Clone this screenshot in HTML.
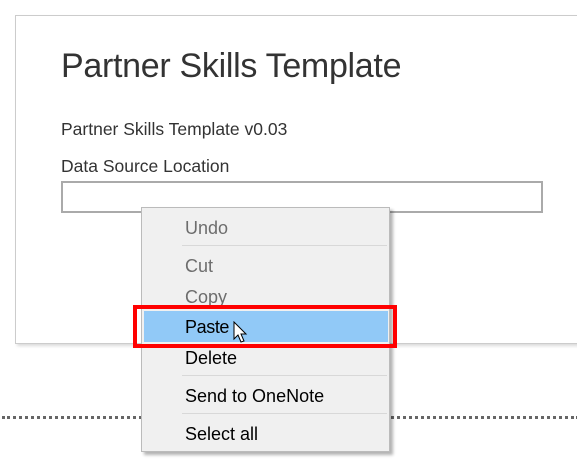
<!DOCTYPE html>
<html><head><meta charset="utf-8"><style>
body{margin:0;width:577px;height:464px;background:#fff;position:relative;overflow:hidden;font-family:"Liberation Sans",sans-serif;}
.panel{position:absolute;left:15px;top:15px;width:600px;height:327px;border:1px solid #ccc;box-shadow:2px 2px 3px rgba(0,0,0,.15);background:#fff;}
.t{position:absolute;left:61px;color:#333;white-space:nowrap;}
.input{position:absolute;left:61px;top:181px;width:478px;height:28px;border:2px solid #aaa;background:#fff;}
.dots{position:absolute;left:2px;top:416px;width:577px;border-top:3px dotted #666;}
.menu{position:absolute;left:141px;top:207px;width:247px;height:243px;background:#f0f0f0;border:1px solid #bbb;box-shadow:3px 3px 3px rgba(0,0,0,.3);}
.it{position:absolute;left:43px;font-size:18px;color:#000;white-space:nowrap;line-height:20px;}
.dis{color:#6d6d6d;}
.sep{position:absolute;left:40px;width:205px;border-top:1px solid #d8d8d8;}
.hl{position:absolute;left:2px;top:103px;width:244px;height:31px;background:#91c9f7;}
.red{position:absolute;left:133px;top:305px;width:256px;height:35px;border:4px solid #f00;}
</style></head><body>
<div class="panel"></div>
<div class="t" style="top:47px;font-size:34px;font-weight:300;color:#333;letter-spacing:-0.3px;">Partner Skills Template</div>
<div class="t" style="top:119px;font-size:17.5px;">Partner Skills Template v0.03</div>
<div class="t" style="top:156px;font-size:17.5px;">Data Source Location</div>
<div class="input"></div>
<div class="dots"></div>
<div class="menu">
 <div class="it dis" style="top:10px">Undo</div>
 <div class="sep" style="top:37px"></div>
 <div class="it dis" style="top:48px">Cut</div>
 <div class="it dis" style="top:79px">Copy</div>
 <div class="hl"></div>
 <div class="it" style="top:109px;letter-spacing:-0.4px">Paste</div>
 <div class="it" style="top:140px">Delete</div>
 <div class="sep" style="top:167px"></div>
 <div class="it" style="top:178px">Send to OneNote</div>
 <div class="sep" style="top:205px"></div>
 <div class="it" style="top:216px">Select all</div>
</div>
<div class="red"></div>
<svg style="position:absolute;left:233px;top:321px" width="16" height="24" viewBox="0 0 16 24"><path d="M1 1 L1 18 L5 14 L8 21 L11 20 L8 13 L13 13 Z" fill="#fff" stroke="#000" stroke-width="1"/></svg>
</body></html>
